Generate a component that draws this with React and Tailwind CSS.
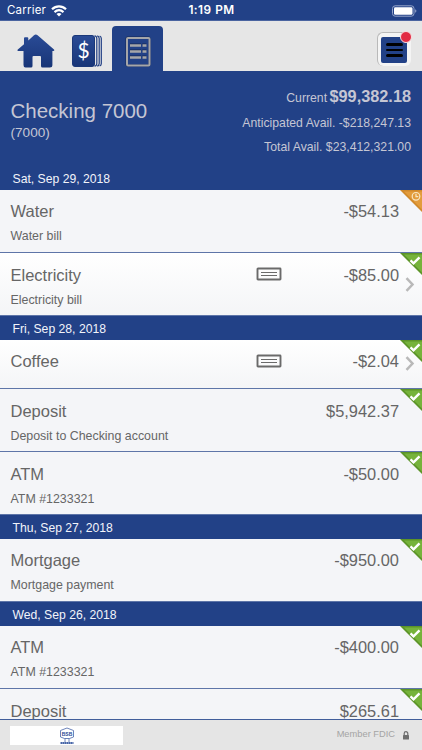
import React from "react";

const days = [
  {
    date: "Sat, Sep 29, 2018",
    items: [
      { title: "Water", note: "Water bill", amount: "-$54.13", pending: true },
      { title: "Electricity", note: "Electricity bill", amount: "-$85.00", check: true },
    ],
  },
  {
    date: "Fri, Sep 28, 2018",
    items: [
      { title: "Coffee", amount: "-$2.04", check: true },
      { title: "Deposit", note: "Deposit to Checking account", amount: "$5,942.37" },
      { title: "ATM", note: "ATM #1233321", amount: "-$50.00" },
    ],
  },
  {
    date: "Thu, Sep 27, 2018",
    items: [{ title: "Mortgage", note: "Mortgage payment", amount: "-$950.00" }],
  },
  {
    date: "Wed, Sep 26, 2018",
    items: [
      { title: "ATM", note: "ATM #1233321", amount: "-$400.00" },
      { title: "Deposit", amount: "$265.61" },
    ],
  },
];

function StatusBar() {
  return (
    <div className="h-[21px] shrink-0 grid grid-cols-3 items-center px-[7px] pt-[1px] text-white border-b border-[#4a64a0] font-['Inter',sans-serif]">
      <div className="flex items-center gap-[5px] text-[11.5px] leading-none tracking-[0.2px]">
        <span>Carrier</span>
        <svg width="16" height="12" viewBox="0 0 16 12" fill="none" stroke="white" strokeWidth="2.2">
          <path d="M1 4.3C5 .4 11 .4 15 4.3" />
          <path d="M3.5 7.1C6.2 4.8 9.8 4.8 12.5 7.1" />
          <path d="M8 11.4 5.5 8.9C7 7.7 9 7.7 10.5 8.9Z" fill="white" stroke="none" />
        </svg>
      </div>
      <div className="text-center text-[11.8px] leading-none font-semibold tracking-[0.5px] pl-[1px]">1:19 PM</div>
      <svg className="justify-self-end -mr-[2px]" width="25" height="12" viewBox="0 0 25 12">
        <rect x="0.5" y="0.8" width="21.5" height="10.4" rx="2.7" fill="none" stroke="#96a6cb" />
        <rect x="2" y="2.3" width="18.5" height="7.4" rx="1.3" fill="white" />
        <path d="M23.2 4.2c1.6.6 1.6 3 0 3.6z" fill="#96a6cb" />
      </svg>
    </div>
  );
}

function Toolbar() {
  return (
    <div className="h-[51px] shrink-0 flex items-end bg-[#e6e6e6] border-b border-[#224187]">
      <svg className="ml-[17px] mb-[3px]" width="38" height="34" viewBox="0 0 38 34">
        <defs>
          <linearGradient id="blue" x1="0" y1="0" x2="0" y2="1">
            <stop offset="0" stopColor="#2a4b96" />
            <stop offset="1" stopColor="#183577" />
          </linearGradient>
        </defs>
        <path d="M17 1.3q1.8-1.4 3.6 0L37 15.5q.9 1.3-.7 1.5H35.4v14q0 2.500-2.500 2.500H25.500q-1.500 0-1.500-1.500V23q0-1-1-1h-6.500q-1 0-1 1v9q0 1.500-1.500 1.500H8.500Q6.500 33.500 6.500 31V17H1.200Q-.2 16.700.8 15.500L7 10.300V4.200Q7 3.200 8 3.200h2.300q1 0 1 1v2.200z" fill="url(#blue)" />
      </svg>
      <div className="relative ml-[17px] mb-[4px]">
        <svg width="30" height="32" viewBox="0 0 30 32">
          <rect x="0.500" y="0.500" width="22" height="31" rx="2.500" fill="url(#blue)" stroke="#1b3879" />
          <path d="M22.500.9q2.300.2 2.300 2.600v25q0 2.400-2.300 2.600M25.200.9q2 .4 2 2.600v25q0 2.200-2 2.600M27.700 1q1.600.6 1.600 2.500v25q0 1.900-1.600 2.500" fill="none" stroke="#213f84" strokeWidth="1.200" />
        </svg>
        <span className="absolute left-[5.500px] top-[3px] text-white text-[21px] leading-[24px] font-['Lato',sans-serif]">$</span>
      </div>
      <div className="ml-[10px] h-[45px] w-[51px] rounded-t-[4px] bg-[#224187] flex justify-center pt-[10px]">
        <svg width="26" height="31" viewBox="0 0 26 31" fill="none">
          <rect x="1.500" y="1.500" width="23" height="28" rx="1" stroke="#172b56" strokeWidth="2" />
          <rect x="2" y="2" width="22.500" height="27.500" rx="1" stroke="#a5a6a9" strokeWidth="2" />
          <path d="M5 8.700h11M17.300 8.700h4M5 14.700h11M17.300 14.700h4M5 20.700h11M17.300 20.700h4" stroke="#172b56" strokeWidth="2.600" />
          <path d="M5 9.500h11M17.500 9.500h4M5 15.500h11M17.500 15.500h4M5 21.500h11M17.500 21.500h4" stroke="#a5a6a9" strokeWidth="2.600" />
        </svg>
      </div>
      <button className="relative ml-auto mr-[11px] mb-[5px] w-[34px] h-[34px] rounded-[6px] border-t border-l border-[#b9b9b9] bg-[#f4f4f4]">
        <span className="flex flex-col items-center justify-center gap-[3px] ml-[3px] mt-[1px] w-[26px] h-[26px] rounded-[2px] bg-[#224187]">
          <span className="w-[17px] h-[2.500px] rounded bg-black" />
          <span className="w-[17px] h-[2.500px] rounded bg-black" />
          <span className="w-[17px] h-[2.500px] rounded bg-black" />
        </span>
        <span className="absolute -top-[2px] -right-[1px] w-[12px] h-[12px] rounded-full border border-[#f7dfe2] bg-[#e22b43]" />
      </button>
    </div>
  );
}

function AccountHeader() {
  return (
    <div className="h-[94px] shrink-0 flex justify-between pl-[10.500px] pr-[11px] text-[#c5c6d4]">
      <div className="pt-[26px]">
        <h1 className="text-[20.500px] leading-[26px]">Checking 7000</h1>
        <p className="text-[13.600px] leading-[18px]">(7000)</p>
      </div>
      <div className="text-right text-[12.250px] pt-[11px]">
        <p className="leading-[26px]">Current <b className="-ml-[1px] text-[16.300px]">$99,382.18</b></p>
        <p className="leading-[24px]">Anticipated Avail. -$218,247.13</p>
        <p className="leading-[25px]">Total Avail. $23,412,321.00</p>
      </div>
    </div>
  );
}

function Corner({ pending }) {
  return (
    <svg className="absolute right-0 top-0" width="22" height="22" viewBox="0 0 22 22" fill="none">
      <path d="M0 0H22V22Z" fill={pending ? "#d0892b" : "#5c9428"} />
      <path d="M4 1.500H22V19.500Z" fill={pending ? "#e39c3c" : "#76b33b"} />
      {pending ? (
        <g stroke="#f8e7c5" strokeWidth="1.200">
          <circle cx="16" cy="6.300" r="3.800" />
          <path d="M16 3.800V6.600h2.300" />
        </g>
      ) : (
        <path d="M10.500 7.300l3 3 6-6" stroke="white" strokeWidth="2.400" />
      )}
    </svg>
  );
}

function Row({ item, first }) {
  const { title, note, amount, pending, check } = item;
  const short = check && !note;
  return (
    <div
      className={`relative shrink-0 border-b border-[#5e75a8] pl-[10.500px] pr-[23px] text-[#666] ${
        first ? "pt-[8.500px]" : "pt-[9.500px]"
      } ${short ? "h-[49px]" : "h-[63px]"} ${
        check ? "bg-linear-to-b from-white to-[#f4f5f7]" : "bg-[#f4f5f8]"
      }`}
    >
      <div className="flex items-center text-[16.400px] leading-[24px]">
        <span className="text-[16.500px]">{title}</span>
        <span className="ml-auto">{amount}</span>
      </div>
      {note && <p className="text-[12.400px] leading-[16px] mt-[5px]">{note}</p>}
      {check && (
        <svg className="absolute left-[256px] top-[14px]" width="26" height="14" viewBox="0 0 26 14" fill="none" stroke="#6a6a6a">
          <rect x="1.500" y="1.500" width="23" height="11" rx="0.500" strokeWidth="1.900" />
          <path d="M5 5.500h16M5 8.500h16" strokeWidth="1.100" />
        </svg>
      )}
      {check && (
        <svg
          className={`absolute right-[7px] ${short ? "top-[16px]" : "top-[24px]"}`}
          width="10"
          height="15"
          viewBox="0 0 10 15"
          fill="none"
          stroke="#b9b9b9"
          strokeWidth="2.500"
        >
          <path d="M1.500 1.200 7.500 7.500 1.500 13.800" />
        </svg>
      )}
      <Corner pending={pending} />
    </div>
  );
}

function Footer() {
  return (
    <div className="h-[31px] shrink-0 flex items-center justify-between border-t border-[#415e9b] bg-[#e5e5e5] pl-[10px] pr-[13px]">
      <div className="w-[113px] h-[19px] bg-white flex justify-center">
        <svg width="16" height="19" viewBox="0 0 16 19" fill="none" stroke="#4765a8">
          <path d="M1.500 4.500 8 2l6.500 2.500V11l-4 1.500h-5L1.500 11zM6 12.500v3.500M10 12.500v3.500" strokeWidth="0.800" />
          <text x="8" y="9.500" textAnchor="middle" fill="#284b96" stroke="none" fontSize="5" fontWeight="900">BSB</text>
          <path d="M1.500 17h13" strokeWidth="1.800" strokeDasharray="1.700 0.300" />
        </svg>
      </div>
      <div className="flex items-center gap-[8px] text-[9.300px] text-[#a4a4a4]">
        <span>Member FDIC</span>
        <svg width="6" height="9" viewBox="0 0 6 9">
          <rect x="0" y="4" width="6" height="4.500" rx="0.500" fill="#6e6e6e" />
          <path d="M1.200 4V2.500a1.800 1.800 0 0 1 3.600 0V4" fill="none" stroke="#6e6e6e" strokeWidth="1.200" />
        </svg>
      </div>
    </div>
  );
}

export default function App() {
  return (
    <div className="w-[422px] h-[750px] overflow-hidden flex flex-col bg-[#224187] font-['Liberation_Sans',Arial,sans-serif]">
      <StatusBar />
      <Toolbar />
      <AccountHeader />
      <div className="flex-1 min-h-0 overflow-hidden flex flex-col">
        {days.map((day) => (
          <React.Fragment key={day.date}>
            <h2 className="h-[24px] shrink-0 pl-[12.500px] text-[12.200px] leading-[26px] text-[#f2f4fa]">{day.date}</h2>
            {day.items.map((item, i) => (
              <Row key={i} item={item} first={i === 0} />
            ))}
          </React.Fragment>
        ))}
      </div>
      <Footer />
    </div>
  );
}
